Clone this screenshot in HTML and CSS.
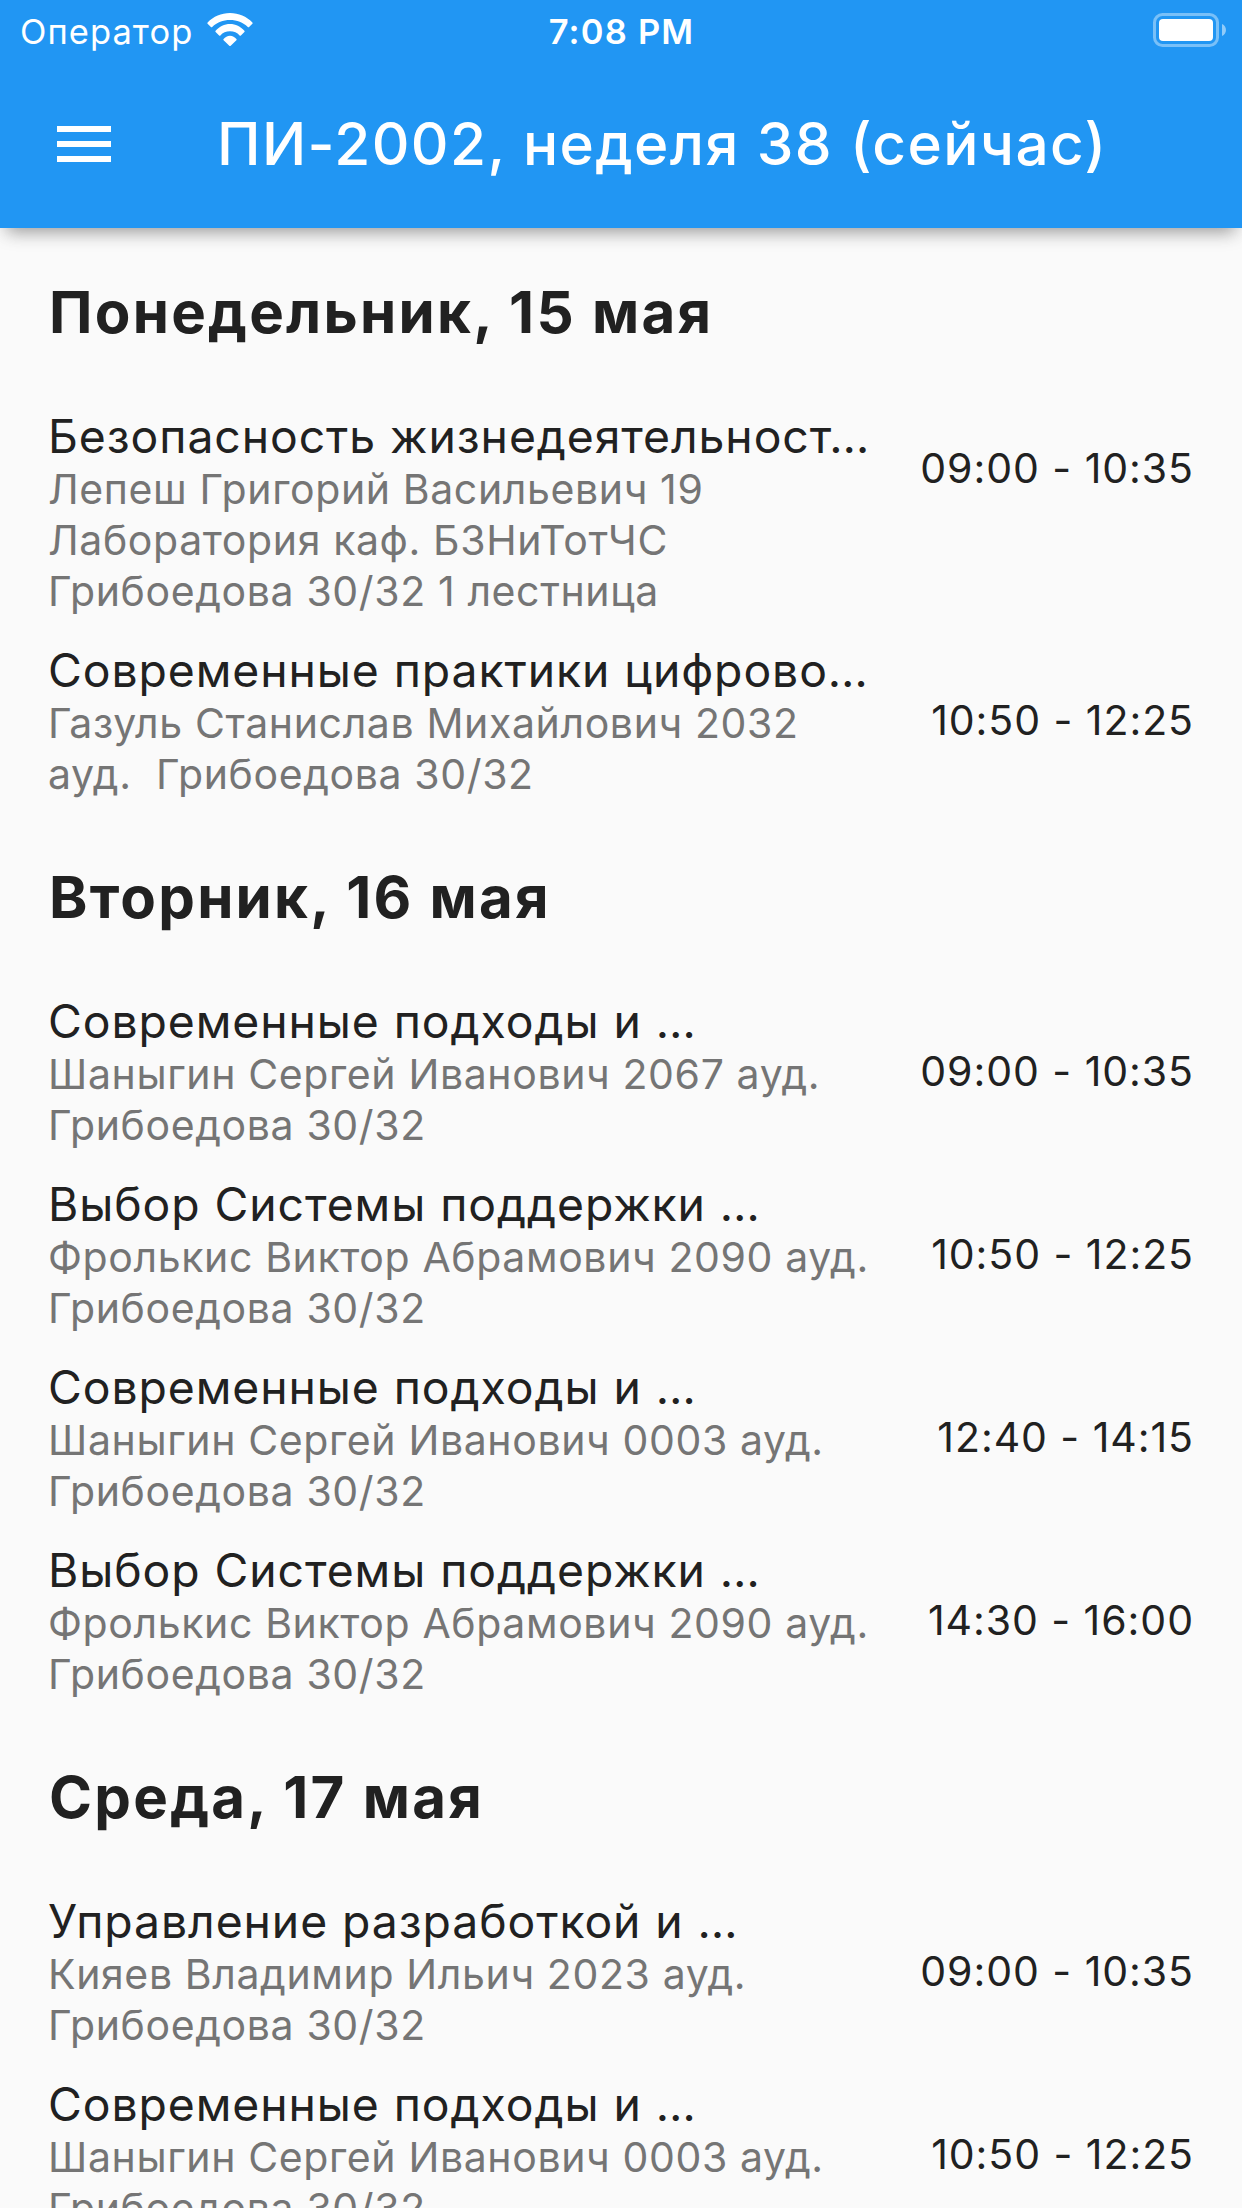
FILE: index.html
```html
<!DOCTYPE html>
<html lang="ru">
<head>
<meta charset="utf-8">
<title>Расписание</title>
<link rel="stylesheet" href="styles.css">
</head>
<body>
<header class="top">
  <div class="status">
    <div class="carrier">
      <span>Оператор</span>
      <svg class="wifi" viewBox="0 0 46 33" fill="#fff">
        <path d="M.6 9.400C6.500 3.500 14.200 0 23 0s16.500 3.500 22.400 9.400c.4.400.4.900 0 1.300l-3.300 3.200c-.4.400-.9.400-1.300 0C36 9.500 30 7 23 7S10 9.500 5.200 13.900c-.4.400-.9.400-1.300 0L.6 10.700c-.4-.4-.4-.9 0-1.300z"/>
        <path d="M8.600 17.800C12.400 13.700 17.400 11 23 11s10.600 2.700 14.400 6.800c.4.400.4.900 0 1.300l-3.500 3.300c-.4.400-.9.400-1.300 0C30.200 19.800 27 18.300 23 18.300s-7.200 1.500-9.600 4.100c-.4.400-.9.400-1.300 0l-3.500-3.300c-.4-.4-.4-.9 0-1.300z"/>
        <path d="M16.600 26.100C18.200 24 20.400 22.700 23 22.700s4.800 1.300 6.400 3.400c.4.400.3.800 0 1.200l-5.700 5.400c-.4.400-1 .4-1.400 0l-5.700-5.400c-.3-.4-.4-.8 0-1.200z"/>
      </svg>
    </div>
    <div class="clock">7:08 PM</div>
    <svg class="battery" viewBox="0 0 73 34">
      <rect x="1.500" y="1.500" width="63" height="31" rx="8" fill="none" stroke="#fff" stroke-opacity=".4" stroke-width="3"/>
      <rect x="6" y="6" width="54" height="22" rx="4" fill="#fff"/>
      <path d="M69 11c5.300 2 5.300 10 0 12z" fill="#fff" fill-opacity=".5"/>
    </svg>
  </div>
  <div class="bar">
    <svg class="menu" viewBox="0 0 54 36"><path fill="#fff" d="M0 0h54v6H0zM0 15h54v6H0zM0 30h54v6H0z"/></svg>
    <h1 class="title">ПИ-2002, неделя 38 (сейчас)</h1>
  </div>
</header>
<main class="list">
  <h2 class="day">Понедельник, 15 мая</h2>
  <section class="item tall">
    <div><p class="name">Безопасность жизнедеятельност…</p><p class="info">Лепеш Григорий Васильевич 19<br>Лаборатория каф. БЗНиТотЧС<br>Грибоедова 30/32 1 лестница</p></div>
    <time class="time">09:00 - 10:35</time>
  </section>
  <section class="item">
    <div><p class="name">Современные практики цифрово…</p><p class="info">Газуль Станислав Михайлович 2032<br>ауд.&nbsp; Грибоедова 30/32</p></div>
    <time class="time">10:50 - 12:25</time>
  </section>
  <h2 class="day">Вторник, 16 мая</h2>
  <section class="item">
    <div><p class="name">Современные подходы и …</p><p class="info">Шаныгин Сергей Иванович 2067 ауд.<br>Грибоедова 30/32</p></div>
    <time class="time">09:00 - 10:35</time>
  </section>
  <section class="item">
    <div><p class="name">Выбор Системы поддержки …</p><p class="info">Фролькис Виктор Абрамович 2090 ауд.<br>Грибоедова 30/32</p></div>
    <time class="time">10:50 - 12:25</time>
  </section>
  <section class="item">
    <div><p class="name">Современные подходы и …</p><p class="info">Шаныгин Сергей Иванович 0003 ауд.<br>Грибоедова 30/32</p></div>
    <time class="time">12:40 - 14:15</time>
  </section>
  <section class="item">
    <div><p class="name">Выбор Системы поддержки …</p><p class="info">Фролькис Виктор Абрамович 2090 ауд.<br>Грибоедова 30/32</p></div>
    <time class="time">14:30 - 16:00</time>
  </section>
  <h2 class="day">Среда, 17 мая</h2>
  <section class="item">
    <div><p class="name">Управление разработкой и …</p><p class="info">Кияев Владимир Ильич 2023 ауд.<br>Грибоедова 30/32</p></div>
    <time class="time">09:00 - 10:35</time>
  </section>
  <section class="item">
    <div><p class="name">Современные подходы и …</p><p class="info">Шаныгин Сергей Иванович 0003 ауд.<br>Грибоедова 30/32</p></div>
    <time class="time">10:50 - 12:25</time>
  </section>
</main>
</body>
</html>
```
FILE: styles.css
```css
* {
  box-sizing: border-box;
}

body {
  margin: 0;
  height: 2208px;
  overflow: hidden;
  background: #fafafa;
  color: #212121;
  font-family: Inter, "Noto Sans", sans-serif;
  white-space: nowrap;
}

.top {
  height: 228px;
  background: #2196f3;
  color: #fff;
  box-shadow: 0 12px 15px -9px rgba(0, 0, 0, .28), 0 9px 18px -3px rgba(0, 0, 0, .14);
}

.status {
  display: grid;
  grid-template-columns: 1fr auto 1fr;
  align-items: start;
  height: 60px;
  padding: 0 16px 0 20px;
  font-size: 34.5px;
  line-height: 64px;
}

.carrier {
  display: flex;
  gap: 14px;
  letter-spacing: 1.05px;
}

.wifi {
  width: 46px;
  height: 33px;
  margin-top: 13px;
}

.clock {
  margin-left: -3px;
  font-weight: 600;
  letter-spacing: 1.2px;
}

.battery {
  justify-self: end;
  width: 73px;
  height: 34px;
  margin-top: 13px;
}

.bar {
  display: flex;
  align-items: center;
  height: 168px;
  padding-left: 57px;
}

.menu {
  width: 54px;
  height: 36px;
}

.title {
  margin: 0 0 0 106px;
  font-size: 58.5px;
  font-weight: 500;
  line-height: 72px;
  letter-spacing: 1.38px;
}

.list {
  padding-top: 1px;
}

.day {
  height: 168px;
  margin: 0;
  padding: 47px 48px 0 49px;
  font-size: 58.2px;
  font-weight: 700;
  line-height: 72px;
  letter-spacing: 2.25px;
}

.item {
  display: flex;
  justify-content: space-between;
  padding: 12px 48px 14px;
}

.name {
  margin: 0 0 1px;
  font-size: 46.3px;
  line-height: 54px;
  letter-spacing: .93px;
}

.info {
  margin: 0;
  color: #757575;
  font-size: 41px;
  line-height: 51px;
  letter-spacing: .62px;
}

.time {
  margin-top: 52px;
  font-size: 41px;
  line-height: 51px;
  letter-spacing: .95px;
}

.tall .time {
  margin-top: 34px;
}
```
